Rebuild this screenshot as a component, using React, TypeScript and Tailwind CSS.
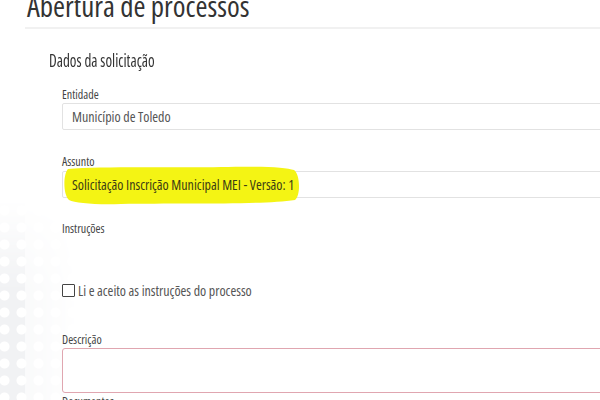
import * as React from "react";

const font = { fontFamily: '"Open Sans", "Liberation Sans", sans-serif' };

interface FieldProps {
  label: string;
  children: React.ReactNode;
  className?: string;
}

const Field: React.FC<FieldProps> = ({ label, children, className }) => (
  <div className={className}>
    <label className="block text-[12px] leading-[14px] text-[#444] font-stretch-semi-condensed">
      {label}
    </label>
    {children}
  </div>
);

export default function App() {
  return (
    <div
      className="relative w-[600px] h-[400px] overflow-hidden bg-white"
      style={font}
    >
      {/* faded dot pattern on the left */}
      <div className="absolute left-0 top-[200px] w-[80px] h-[200px] bg-[#f1f2f4] [mask-image:linear-gradient(to_right,black_30%,transparent),linear-gradient(to_bottom,transparent,black_45%)] [mask-composite:intersect]">
        <div className="w-full h-full bg-[radial-gradient(circle,#ffffff_4.5px,transparent_5.5px)] bg-[length:17px_17px] bg-[position:-4px_2px]" />
      </div>

      <div className="relative">
        <h1 className="ml-[27px] -mt-[12px] h-[39px] text-[29px] leading-[36px] text-[#333] font-stretch-semi-condensed">
          Abertura de processos
        </h1>

        <div className="ml-[25px] w-[640px] border-t-2 border-[#f1f1f1] bg-white/60 pl-[24px]">
          <h2 className="mt-[21px] origin-left scale-x-[0.84] text-[18px] leading-[20px] text-[#333] font-stretch-condensed">
            Dados da solicitação
          </h2>

          <Field label="Entidade" className="mt-[18px] ml-[13px]">
            <div className="mt-[1px] h-[27px] border border-[#e2e2e2] rounded-[2px] pl-[9px] flex items-center text-[14px] text-[#555] font-stretch-semi-condensed">
              Município de Toledo
            </div>
          </Field>

          <Field label="Assunto" className="mt-[25px] ml-[13px]">
            <div className="relative mt-[2px] h-[27px] border border-[#e2e2e2] rounded-[2px] pl-[9px] flex items-center text-[14px] text-[#555] font-stretch-semi-condensed">
              <svg
                className="absolute left-[-2px] top-[-7px] w-[240px] h-[42px]"
                viewBox="0 0 240 42"
              >
                <path
                  d="M7 4 C40 1 120 3 160 2 C200 1 225 2 233 5 C239 9 240 30 234 35 C200 40 120 38 60 39 C35 40 14 38 8 35 C2 30 2 9 7 4 Z"
                  fill="#f4f414"
                />
              </svg>
              <span className="relative text-[#3c3c14]">
                Solicitação Inscrição Municipal MEI - Versão: 1
              </span>
            </div>
          </Field>

          <div className="mt-[24px] ml-[13px] text-[12px] leading-[14px] text-[#444] font-stretch-semi-condensed">
            Instruções
          </div>

          <label className="mt-[44px] ml-[13px] h-[20px] flex items-center gap-[3px] text-[14px] text-[#555] font-stretch-semi-condensed">
            <span className="w-[13px] h-[13px] border-[1.5px] border-[#444] rounded-[1px] bg-white" />
            Li e aceito as instruções do processo
          </label>

          <Field label="Descrição" className="mt-[33px] ml-[13px]">
            <div className="mt-[1px] h-[45px] border border-[#e0a6b0] rounded-[3px] bg-white" />
          </Field>

          <div className="mt-[2px] ml-[13px] text-[12px] leading-[14px] text-[#444] font-stretch-semi-condensed">
            Documentos
          </div>
        </div>
      </div>
    </div>
  );
}
